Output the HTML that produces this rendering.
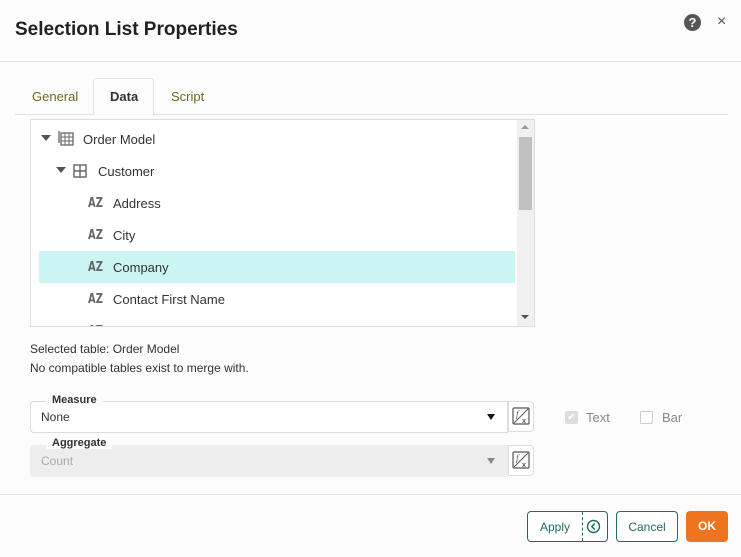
<!DOCTYPE html>
<html><head><style>
*{box-sizing:border-box;margin:0;padding:0}
body{width:741px;height:557px;background:#fcfcfc;font-family:"Liberation Sans",sans-serif;position:relative;overflow:hidden;color:#333}
.a{position:absolute}
.t{font-size:13px;color:#333}
.az{font-weight:bold;font-size:13px;color:#666;font-family:"DejaVu Sans Condensed","Liberation Sans",sans-serif;transform:scaleX(0.85);transform-origin:left}
.row{position:absolute;left:8px;width:476px;height:32px;line-height:32px;font-size:13px;color:#333}
.fx{position:absolute;width:26px;height:31px;border:1px solid #ddd;border-radius:0 4px 4px 0;background:#fff}
.btn{position:absolute;top:511px;height:31px;border:1px solid #1f6b63;border-radius:4px;color:#1f6b63;font-size:12px;text-align:center;line-height:30px;background:#fff}
</style></head><body>
<div class="a" style="left:15px;top:19px;font-size:19px;font-weight:bold;color:#222">Selection List Properties</div>
<div class="a" style="left:684px;top:14px;width:17px;height:17px;border-radius:50%;background:#555;color:#fff;font-size:13px;font-weight:bold;text-align:center;line-height:17px">?</div>
<div class="a" style="left:717px;top:13px;font-size:16px;color:#555">×</div>
<div class="a" style="left:0;top:61px;width:741px;height:1px;background:#e4e4e8"></div>
<div class="a" style="left:15px;top:114px;width:713px;height:1px;background:#dfe0e6"></div>
<div class="a" style="left:93px;top:78px;width:61px;height:37px;border:1px solid #e0e0e0;border-bottom:none;background:#fcfcfc;border-radius:3px 3px 0 0"></div>
<div class="a" style="left:32px;top:89px;font-size:13px;color:#6b6b1f">General</div>
<div class="a" style="left:110px;top:89px;font-size:13px;color:#333;font-weight:bold">Data</div>
<div class="a" style="left:171px;top:89px;font-size:13px;color:#6b6b1f">Script</div>
<div class="a" style="left:30px;top:119px;width:505px;height:208px;border:1px solid #ddd;background:#fff;overflow:hidden">
 <div class="a" style="left:486px;top:0;width:18px;height:206px;background:#f0f0f0"></div>
 <div class="a" style="left:488px;top:17px;width:13px;height:73px;background:#c0c0c0"></div>
 <div class="a" style="left:490px;top:5px;width:0;height:0;border:4px solid transparent;border-bottom-color:#999;border-top:none"></div>
 <div class="a" style="left:490px;top:195px;width:0;height:0;border:4px solid transparent;border-top-color:#555;border-bottom:none"></div>
 <div class="row" style="top:131px;background:#cbf5f3"></div>
 <div class="a" style="left:10px;top:15px;border:5px solid transparent;border-top:6px solid #555;border-bottom:none"></div>
 <svg class="a" style="left:27px;top:10px" width="16" height="16" viewBox="0 0 16 16"><rect x="3" y="3" width="12" height="12" fill="none" stroke="#666" stroke-width="1.3"/><path d="M3 7H15M3 11H15M7 3V15M11 3V15" stroke="#666" stroke-width="1"/><path d="M1 1V13" stroke="#666" stroke-width="1.3"/></svg>
 <div class="a t" style="left:52px;top:12px">Order Model</div>
 <div class="a" style="left:25px;top:47px;border:5px solid transparent;border-top:6px solid #555;border-bottom:none"></div>
 <svg class="a" style="left:42px;top:44px" width="14" height="14" viewBox="0 0 14 14"><rect x="1" y="1" width="12" height="12" fill="none" stroke="#666" stroke-width="1.4"/><path d="M1 7H13M7 1V13" stroke="#666" stroke-width="1.4"/></svg>
 <div class="a t" style="left:67px;top:44px">Customer</div>
 <div class="a az" style="left:57px;top:76px">AZ</div><div class="a t" style="left:82px;top:76px">Address</div>
 <div class="a az" style="left:57px;top:108px">AZ</div><div class="a t" style="left:82px;top:108px">City</div>
 <div class="a az" style="left:57px;top:140px">AZ</div><div class="a t" style="left:82px;top:140px">Company</div>
 <div class="a az" style="left:57px;top:172px">AZ</div><div class="a t" style="left:82px;top:172px">Contact First Name</div>
 <div class="a az" style="left:57px;top:204px">AZ</div>
</div>
<div class="a" style="left:30px;top:342px;font-size:12px;color:#333">Selected table: Order Model</div>
<div class="a" style="left:30px;top:361px;font-size:12px;color:#333">No compatible tables exist to merge with.</div>
<div class="a" style="left:30px;top:401px;width:478px;height:32px;border:1px solid #ddd;border-radius:4px 0 0 4px;background:#fff"></div>
<div class="a" style="left:46px;top:394px;padding:0 6px;background:#fcfcfc;font-size:11px;font-weight:bold;color:#333">Measure</div>
<div class="a" style="left:41px;top:410px;font-size:12px;color:#333">None</div>
<div class="a" style="left:487px;top:414px;border:4px solid transparent;border-top:6px solid #111;border-bottom:none"></div>
<div class="fx" style="left:508px;top:401px"></div>
<div class="a" style="left:30px;top:445px;width:478px;height:32px;border-radius:4px 0 0 4px;background:#ededed"></div>
<div class="a" style="left:46px;top:437px;padding:0 6px;background:#fcfcfc;font-size:11px;font-weight:bold;color:#333">Aggregate</div>
<div class="a" style="left:41px;top:454px;font-size:12px;color:#aaa">Count</div>
<div class="a" style="left:487px;top:458px;border:4px solid transparent;border-top:6px solid #888;border-bottom:none"></div>
<div class="fx" style="left:508px;top:445px"></div>
<svg class="a" style="left:512px;top:407px" width="18" height="18" viewBox="0 0 18 18"><rect x="1" y="1" width="16" height="16" rx="1" fill="none" stroke="#555" stroke-width="1.2"/><path d="M2 16L16 2" stroke="#555"/><text x="4" y="10" font-size="9" font-style="italic" fill="#555" font-family="Liberation Serif">f</text><text x="10" y="16" font-size="7" fill="#555" font-weight="bold">x</text></svg>
<svg class="a" style="left:512px;top:451px" width="18" height="18" viewBox="0 0 18 18"><rect x="1" y="1" width="16" height="16" rx="1" fill="none" stroke="#555" stroke-width="1.2"/><path d="M2 16L16 2" stroke="#555"/><text x="4" y="10" font-size="9" font-style="italic" fill="#555" font-family="Liberation Serif">f</text><text x="10" y="16" font-size="7" fill="#555" font-weight="bold">x</text></svg>
<div class="a" style="left:565px;top:411px;width:13px;height:13px;border-radius:2px;background:#ddd;color:#fff;font-size:10px;text-align:center;line-height:13px">✔</div>
<div class="a" style="left:586px;top:410px;font-size:13px;color:#888">Text</div>
<div class="a" style="left:640px;top:411px;width:13px;height:13px;border-radius:2px;border:1px solid #ccc;background:#fff"></div>
<div class="a" style="left:662px;top:410px;font-size:13px;color:#888">Bar</div>
<div class="a" style="left:0;top:494px;width:741px;height:1px;background:#e4e4e8"></div>
<div class="btn" style="left:527px;width:81px;text-align:left;padding-left:12px">Apply</div>
<div class="a" style="left:582px;top:512px;height:29px;border-left:1px dashed #1f6b63"></div>
<svg class="a" style="left:586px;top:519px" width="15" height="15" viewBox="0 0 15 15"><circle cx="7.5" cy="7.5" r="6" fill="none" stroke="#1f6b63" stroke-width="1.4"/><path d="M8.8 4.5L5.8 7.5L8.8 10.5" fill="none" stroke="#1f6b63" stroke-width="1.5"/></svg>
<div class="btn" style="left:616px;width:62px">Cancel</div>
<div class="a" style="left:686px;top:511px;width:42px;height:31px;border-radius:4px;background:#ef7420;color:#fff;font-size:12px;font-weight:bold;text-align:center;line-height:31px">OK</div>
</body></html>
